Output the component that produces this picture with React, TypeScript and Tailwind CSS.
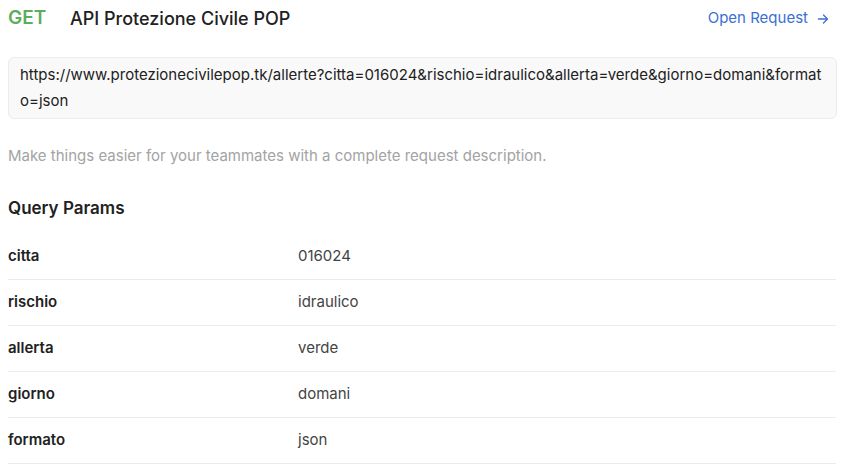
const params = [
  { key: "citta", value: "016024" },
  { key: "rischio", value: "idraulico" },
  { key: "allerta", value: "verde" },
  { key: "giorno", value: "domani" },
  { key: "formato", value: "json" },
];

export default function App() {
  return (
    <main className="min-h-screen bg-white pl-2 pr-[5px] font-['Inter',sans-serif] text-[#212121]">
      {/* header */}
      <header className="flex h-[37px] items-center justify-between">
        <div className="flex items-center">
          <span className="w-[62px] text-[19px] font-semibold text-[#5cad5c]">GET</span>
          <h1 className="text-[18px] font-medium">API Protezione Civile POP</h1>
        </div>
        <a className="mr-[8px] flex items-center gap-[9px] text-[15px] text-[#3b6fd2]" href="#">
          Open Request
          <svg width="12" height="12" viewBox="0 0 12 12" fill="none" stroke="currentColor" strokeWidth="1.3" strokeLinecap="round" strokeLinejoin="round">
            <path d="M1.5 6h9M6.5 2l4 4-4 4" />
          </svg>
        </a>
      </header>

      <div className="mt-[20px] rounded-md border border-[#ececec] bg-[#f9f9f9] px-[11px] py-[4px] text-[15px] leading-[26px] break-all">
        https://www.protezionecivilepop.tk/allerte?citta=016024&amp;rischio=idraulico&amp;allerta=verde&amp;giorno=domani&amp;formato=json
      </div>

      <p className="mt-[26px] text-[15px] text-[#a3a3a3]">
        Make things easier for your teammates with a complete request description.
      </p>

      <h2 className="mt-[28px] text-[17px] font-semibold">Query Params</h2>

      <div className="mt-[13px] mr-[1px]">
        {params.map((p) => (
          <div key={p.key} className="grid h-[46px] grid-cols-[290px_1fr] items-center border-b border-[#ebebeb] text-[15px]">
            <span className="font-semibold">{p.key}</span>
            <span className="text-[#444]">{p.value}</span>
          </div>
        ))}
      </div>
    </main>
  );
}
